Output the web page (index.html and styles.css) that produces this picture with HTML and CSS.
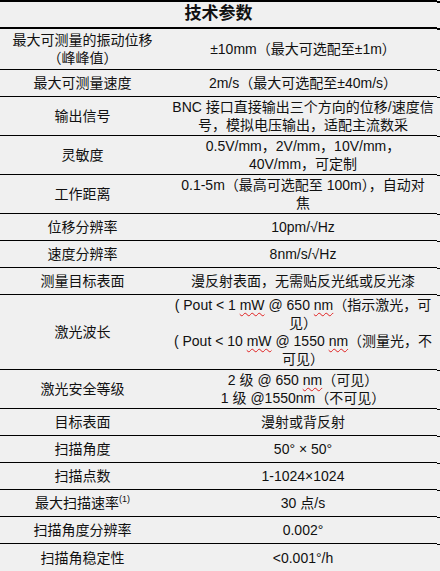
FILE: index.html
```html
<!DOCTYPE html>
<html lang="zh">
<head>
<meta charset="utf-8">
<link rel="stylesheet" href="styles.css">
</head>
<body>
<div class="table">
  <div class="head">技术参数</div>
  <div class="row first"><div class="k">最大可测量的振动位移<br>（峰峰值）</div><div class="v">±10mm（最大可选配至±1m）</div></div>
  <div class="row"><div class="k">最大可测量速度</div><div class="v">2m/s（最大可选配至±40m/s）</div></div>
  <div class="row"><div class="k">输出信号</div><div class="v">BNC 接口直接输出三个方向的位移/速度信<br>号，模拟电压输出，适配主流数采</div></div>
  <div class="row"><div class="k">灵敏度</div><div class="v">0.5V/mm，2V/mm，10V/mm，<br>40V/mm，可定制</div></div>
  <div class="row"><div class="k">工作距离</div><div class="v">0.1-5m（最高可选配至 100m），自动对<br>焦</div></div>
  <div class="row"><div class="k">位移分辨率</div><div class="v">10pm/√Hz</div></div>
  <div class="row"><div class="k">速度分辨率</div><div class="v">8nm/s/√Hz</div></div>
  <div class="row"><div class="k">测量目标表面</div><div class="v">漫反射表面，无需贴反光纸或反光漆</div></div>
  <div class="row"><div class="k">激光波长</div><div class="v">( Pout &lt; 1 <span class="sp">mW</span> @ 650 <span class="sp">nm</span>（指示激光，可<br>见）<br>( Pout &lt; 10 <span class="sp">mW</span> @ 1550 <span class="sp">nm</span>（测量光，不<br>可见）</div></div>
  <div class="row"><div class="k">激光安全等级</div><div class="v">2 级 @ 650 <span class="sp">nm</span>（可见）<br>1 级 @1550nm（不可见）</div></div>
  <div class="row"><div class="k">目标表面</div><div class="v">漫射或背反射</div></div>
  <div class="row"><div class="k">扫描角度</div><div class="v">50° × 50°</div></div>
  <div class="row"><div class="k">扫描点数</div><div class="v">1-1024×1024</div></div>
  <div class="row"><div class="k">最大扫描速率<sup>(1)</sup></div><div class="v">30 点/s</div></div>
  <div class="row"><div class="k">扫描角度分辨率</div><div class="v">0.002°</div></div>
  <div class="row last"><div class="k">扫描角稳定性</div><div class="v">&lt;0.001°/h</div></div>
</div>
</body>
</html>
```

FILE: styles.css
```css
html, body {
  margin: 0;
  padding: 0;
  background: #f0f0f0;
}
body {
  width: 440px;
  height: 571px;
  overflow: hidden;
  font-family: "Liberation Sans", "Noto Sans CJK SC", sans-serif;
  font-size: 14px;
  color: #111;
}
.table {
  width: 437px;
}
.head {
  position: relative;
  box-sizing: border-box;
  height: 29px;
  border-top: 2px solid #000;
  border-bottom: 2px solid #000;
  text-align: center;
  font-weight: bold;
  font-size: 17px;
  line-height: 24px;
  padding-left: 0;
}
.head::before,
.head::after {
  content: "";
  position: absolute;
  right: -3px;
  width: 3px;
  height: 2px;
  background: #000;
}
.head::before { top: -1px; }
.head::after { bottom: -3px; }
.row {
  position: relative;
  box-sizing: border-box;
  display: grid;
  grid-template-columns: 165px 1fr;
  align-items: center;
  min-height: 27px;
  border-bottom: 1px solid #000;
  line-height: 18px;
}
.row::after {
  content: "";
  position: absolute;
  right: -3px;
  bottom: -2px;
  width: 3px;
  height: 1px;
  background: #000;
}
.row.first {
  min-height: 41px;
}
.row.last {
  border-bottom: none;
}
.row.last::after {
  display: none;
}
.k {
  text-align: center;
  padding: 1px 0;
}
.v {
  text-align: center;
  padding: 1px 0 1px 4px;
}
.sp {
  text-decoration: underline wavy #e02020;
  text-decoration-thickness: 1px;
  text-underline-offset: 2px;
}
sup {
  font-size: 9px;
  line-height: 0;
  vertical-align: 6px;
}
```
